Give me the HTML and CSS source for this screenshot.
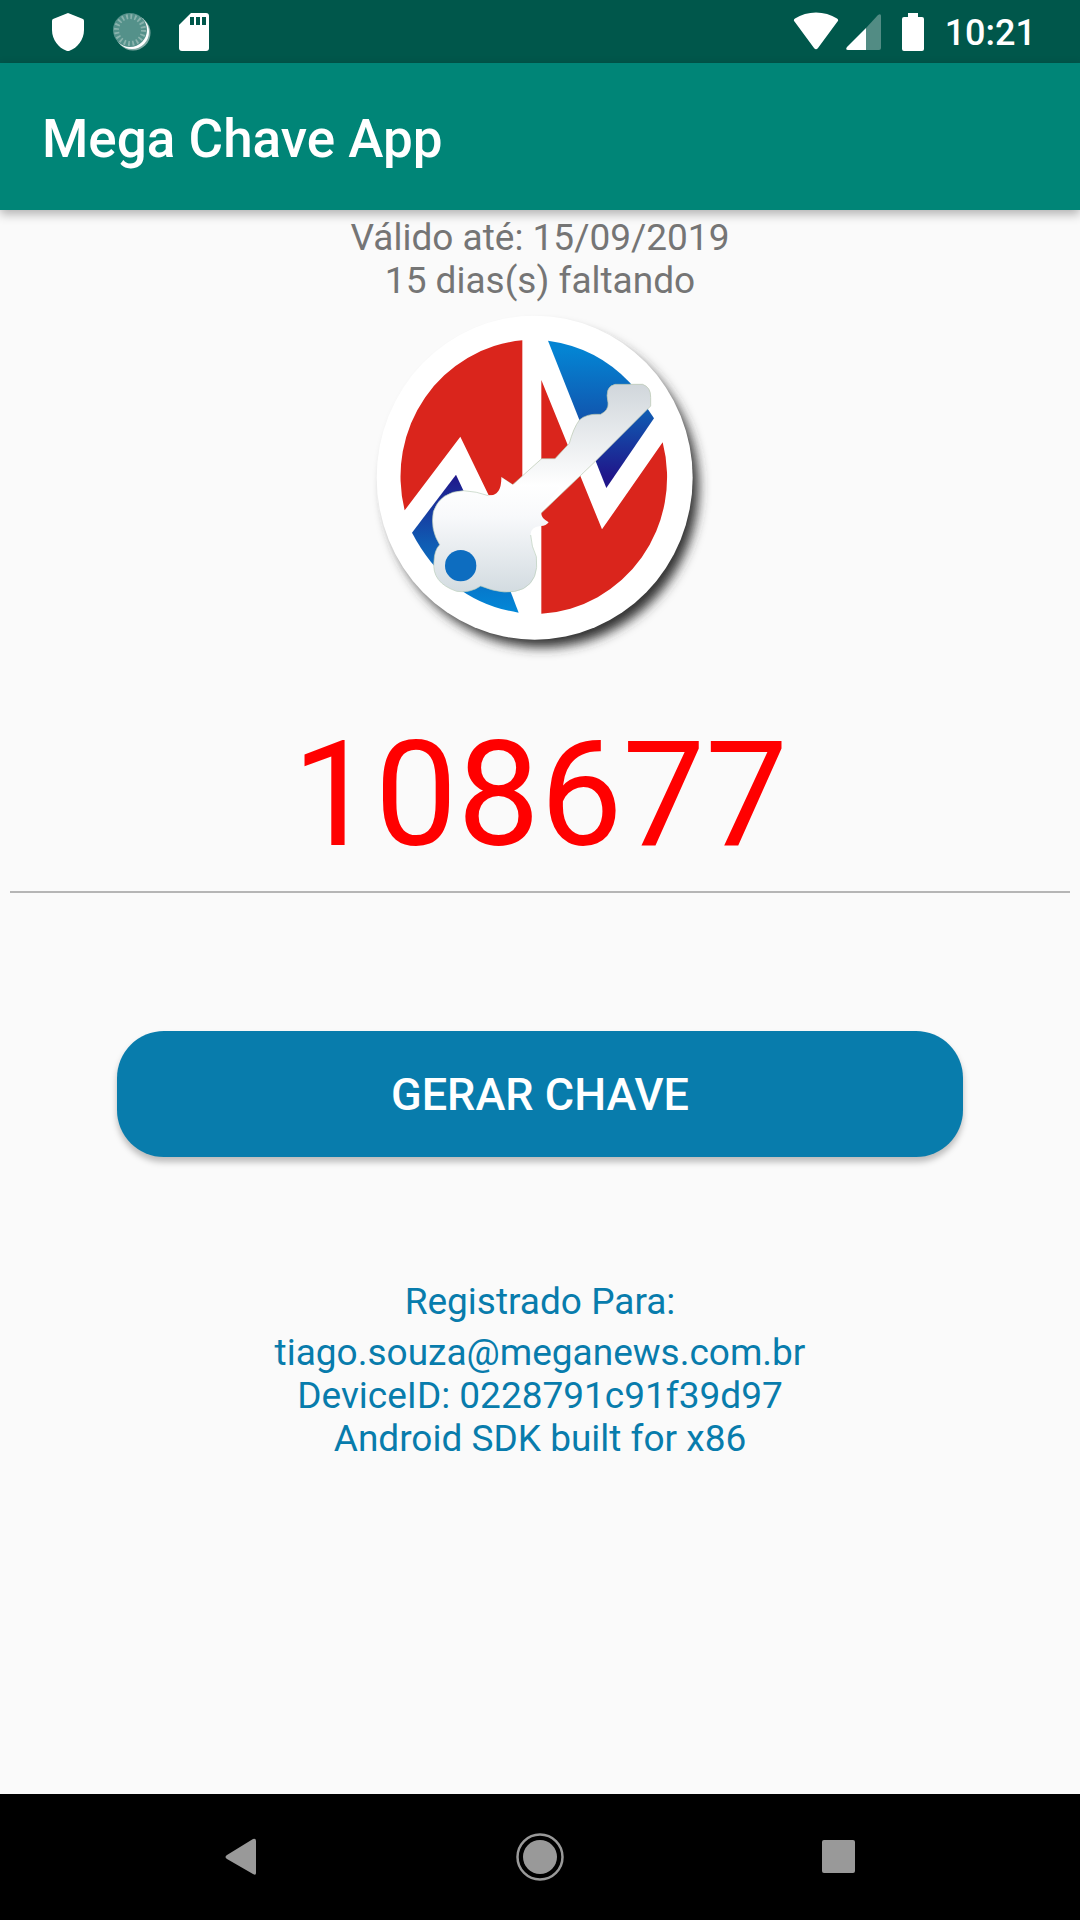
FILE: index.html
```
<!DOCTYPE html>
<html lang="pt-BR">

<head>
    <meta charset="UTF-8">
    <meta name="viewport" content="width=device-width, initial-scale=1.0">
    <title>Mega Chave App</title>
    <link rel="stylesheet" href="styles.css">
</head>

<body>
    <div class="status-bar">
        <div class="status-left">
            <svg width="36" height="40" viewBox="0 0 36 40">
                <path d="M18 1L33 7Q34 7.500 34 9V18C34 28 27 36 20 38.500Q18 39.500 16 38.500C9 36 2 28 2 18V9Q2 7.500 3 7Z" fill="#fff"/>
            </svg>
            <svg width="38" height="40" viewBox="0 0 38 40">
                <circle cx="20" cy="21" r="17.500" fill="#fff" opacity=".5"/>
                <circle cx="19" cy="20" r="17" fill="#fff"/>
                <circle cx="17" cy="18" r="17" fill="#54918a"/>
                <circle cx="17" cy="18" r="13.500" fill="none" stroke="#8ab3ad" stroke-width="5" stroke-dasharray="1.800 2.440"/>
            </svg>
            <svg width="32" height="40" viewBox="0 0 32 40">
                <path d="M13 1H28Q31 1 31 4V36Q31 39 28 39H4Q1 39 1 36V13Z" fill="#fff"/>
                <path d="M12 5h4v8h-4zM18 5h4v8h-4zM24 5h4v8h-4z" fill="#00574b"/>
            </svg>
        </div>
        <div class="status-right">
            <svg width="46" height="40" viewBox="0 0 46 40">
                <path d="M1.500 9.500Q0 8 2 6.500C14 -1.500 32 -1.500 44 6.500Q46 8 44.500 9.500L25 36Q23 38.500 21 36Z" fill="#fff"/>
            </svg>
            <svg width="36" height="40" viewBox="0 0 36 40">
                <path d="M21 16L33 3Q36 1 36 4V36Q36 38 34 38H21Z" fill="#528c84"/>
                <path d="M21 16V38H3Q0 38 2 35Z" fill="#fff"/>
            </svg>
            <svg class="battery" width="22" height="40" viewBox="0 0 22 40">
                <path d="M6 1H16V5H20Q22 5 22 7V37Q22 39 20 39H2Q0 39 0 37V7Q0 5 2 5H6Z" fill="#fff"/>
            </svg>
            <span class="clock">10:21</span>
        </div>
    </div>

    <header class="app-bar">
        <h1>Mega Chave App</h1>
    </header>

    <main class="content">
        <p class="validity">Válido até: 15/09/2019<br>15 dias(s) faltando</p>

        <svg class="logo" width="360" height="366" viewBox="0 12 1080 1098" role="img" aria-label="Mega Chave">
            <defs>
                <linearGradient id="blueTop" gradientUnits="userSpaceOnUse" x1="0" y1="150" x2="0" y2="530">
                    <stop offset="0" stop-color="#0484d3"/>
                    <stop offset="0.500" stop-color="#1059b1"/>
                    <stop offset="1" stop-color="#20168a"/>
                </linearGradient>
                <linearGradient id="blueBottom" x1="0" y1="0" x2="0" y2="1">
                    <stop offset="0" stop-color="#20168a"/>
                    <stop offset="0.500" stop-color="#0f5cb3"/>
                    <stop offset="1" stop-color="#0288d8"/>
                </linearGradient>
                <linearGradient id="keyBlade" gradientUnits="userSpaceOnUse" x1="0" y1="250" x2="0" y2="560">
                    <stop offset="0" stop-color="#d0d6db"/>
                    <stop offset="1" stop-color="#fff"/>
                </linearGradient>
                <linearGradient id="keyHead" gradientUnits="userSpaceOnUse" x1="0" y1="550" x2="0" y2="880">
                    <stop offset="0" stop-color="#fff"/>
                    <stop offset="0.300" stop-color="#f8f9fb"/>
                    <stop offset="1" stop-color="#d2dbe0"/>
                </linearGradient>
                <filter id="shadow" x="-10%" y="-10%" width="120%" height="120%">
                    <feGaussianBlur stdDeviation="18"/>
                </filter>
            </defs>
            <ellipse cx="546" cy="562" rx="470" ry="480" fill="#333" filter="url(#shadow)"/>
            <ellipse cx="524" cy="533" rx="474" ry="486" fill="#fff"/>
            <path d="M487 121A400 410 0 0 0 134 631L301 410L386 586L487 586Z" fill="#da251c"/>
            <path d="M544 240L726 688L908 427A400 410 0 0 1 544 941Z" fill="#da251c"/>
            <path d="M564 122Q710 142 810 248L882 355L739 564Z" fill="url(#blueTop)"/>
            <path d="M288 524L156 698Q265 905 476 938L450 870Z" fill="url(#blueBottom)"/>
            <path d="M424 532L458 554L545 476H585L628 430Q640 385 658 360Q680 340 722 343Q747 330 744 308Q733 260 765 253H848Q873 262 872 292V318L705 485L543 640" fill="url(#keyBlade)" stroke="#b6c5ad" stroke-width="2"/>
            <path d="M310 572Q350 574 385 587Q425 588 424 532L458 554L487 553L600 560L543 636Q540 652 566 667Q558 679 540 678Q510 683 512 705Q514 740 529 770Q538 840 490 866Q440 890 362 858Q330 880 290 874Q214 848 222 784Q223 750 239 734Q210 690 220 635Q240 575 310 572Z" fill="url(#keyHead)"/>
            <path d="M512 705Q514 740 529 770Q538 840 490 866Q440 890 362 858Q330 880 290 874Q214 848 222 784Q223 750 239 734Q210 690 220 635Q240 575 310 572Q350 574 385 587" fill="none" stroke="#b9cdb9" stroke-width="2"/>
            <circle cx="302" cy="797" r="47" fill="#0d6dc0"/>
        </svg>

        <input class="key-field" type="text" value="108677" aria-label="Chave" readonly>

        <button class="generate" type="button">GERAR CHAVE</button>

        <div class="registered">
            <p>Registrado Para:</p>
            <p>tiago.souza@meganews.com.br<br>DeviceID: 0228791c91f39d97<br>Android SDK built for x86</p>
        </div>
    </main>

    <nav class="nav-bar">
        <button type="button" aria-label="Voltar">
            <svg width="48" height="48" viewBox="0 0 48 48">
                <path d="M36 6Q39 5 39 8V40Q39 43 36 41L10 26Q7 24 10 22Z" fill="#999"/>
            </svg>
        </button>
        <button type="button" aria-label="Início">
            <svg width="48" height="48" viewBox="0 0 48 48">
                <circle cx="24" cy="24" r="22.500" fill="none" stroke="#999" stroke-width="2.500"/>
                <circle cx="24" cy="24" r="17" fill="#999"/>
            </svg>
        </button>
        <button type="button" aria-label="Recentes">
            <svg width="48" height="48" viewBox="0 0 48 48">
                <rect x="7" y="7" width="33" height="33" rx="2" fill="#999"/>
            </svg>
        </button>
    </nav>
</body>

</html>
```

FILE: styles.css
```
* {
    box-sizing: border-box;
}

body {
    font-family: Roboto, sans-serif;
    font-size: 37px;
    line-height: 43px;
    background-color: #fafafa;
    color: #757575;
    margin: 0;
    display: flex;
    flex-direction: column;
    min-height: 100vh;
}

h1,
p {
    margin: 0;
}

svg {
    display: block;
}

.status-bar {
    background-color: #00574b;
    color: white;
    height: 63px;
    padding: 0 44px 0 50px;
    display: flex;
    justify-content: space-between;
    align-items: center;
}

.status-left,
.status-right {
    display: flex;
    align-items: center;
}

.status-left {
    gap: 27px;
}

.status-right {
    gap: 6px;
}

.battery {
    margin: 0 15px;
}

.clock {
    padding-top: 3px;
    font-size: 36px;
    font-weight: 500;
}

.app-bar {
    background-color: #008577;
    color: white;
    height: 147px;
    padding: 4px 42px 0;
    display: flex;
    align-items: center;
    box-shadow: 0 4px 10px rgba(0, 0, 0, 0.3);
}

.app-bar h1 {
    font-size: 53px;
    font-weight: 500;
    line-height: 62px;
}

.content {
    flex: 1;
    display: flex;
    flex-direction: column;
    align-items: center;
    padding: 6px 10px 40px;
    text-align: center;
}

.logo {
    margin-top: 2px;
}

.key-field {
    width: 100%;
    height: 185px;
    margin-top: 38px;
    padding: 0 0 10px;
    border: none;
    border-bottom: 2px solid #b5b5b5;
    background: none;
    color: #ff0000;
    font-family: inherit;
    font-size: 147px;
    text-align: center;
    outline: none;
}

.generate {
    align-self: stretch;
    height: 126px;
    margin: 138px 107px 0;
    border: none;
    border-radius: 47px;
    background-color: #087cac;
    color: white;
    font-family: inherit;
    font-size: 45px;
    font-weight: 500;
    box-shadow: 0 5px 6px rgba(0, 0, 0, 0.25);
    cursor: pointer;
}

.registered {
    display: flex;
    flex-direction: column;
    gap: 8px;
    margin-top: 123px;
    color: #087cac;
}

.nav-bar {
    background-color: black;
    height: 126px;
    padding: 0 92px;
    display: flex;
}

.nav-bar button {
    flex: 1;
    display: flex;
    justify-content: center;
    align-items: center;
    padding: 0;
    border: none;
    background: none;
    cursor: pointer;
}
```
